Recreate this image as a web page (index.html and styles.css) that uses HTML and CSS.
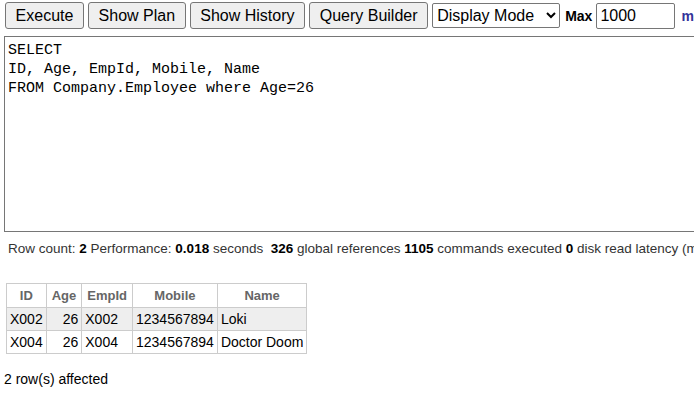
FILE: index.html
```html
<!DOCTYPE html>
<html lang="en">
<head>
  <meta charset="UTF-8" />
  <title>SQL Query</title>
  <link rel="stylesheet" href="styles.css">
</head>
<body>
  <div class="toolbar">
    <button class="btn">Execute</button>
    <button class="btn">Show Plan</button>
    <button class="btn">Show History</button>
    <button class="btn">Query Builder</button>
    <select class="mode">
      <option>Display Mode</option>
    </select>
    <b class="max-label">Max</b>
    <input class="max" type="text" value="1000" />
    <a class="more" href="#">more</a>
  </div>

  <textarea class="query" spellcheck="false">SELECT
ID, Age, EmpId, Mobile, Name
FROM Company.Employee where Age=26</textarea>

  <p class="stats">Row count: <b>2</b> Performance: <b>0.018</b> seconds&nbsp; <b>326</b> global references <b>1105</b> commands executed <b>0</b> disk read latency (ms)</p>

  <table class="results">
    <tr>
      <th>ID</th><th>Age</th><th>EmpId</th><th>Mobile</th><th>Name</th>
    </tr>
    <tr class="odd">
      <td>X002</td><td class="num">26</td><td>X002</td><td>1234567894</td><td>Loki</td>
    </tr>
    <tr>
      <td>X004</td><td class="num">26</td><td>X004</td><td>1234567894</td><td>Doctor Doom</td>
    </tr>
  </table>

  <p class="affected">2 row(s) affected</p>
</body>
</html>
```

FILE: styles.css
```css
body {
  margin: 0;
  padding: 2px 0 0 4px;
  font-family: "Liberation Sans", Arial, sans-serif;
  color: #000;
  overflow: hidden;
  white-space: nowrap;
}
.toolbar {
  display: flex;
  align-items: center;
  gap: 4px;
  height: 27px;
}
.toolbar > * {
  flex-shrink: 0;
}
.btn {
  font-family: "Liberation Sans", Arial, sans-serif;
  font-size: 16px;
  height: 27px;
  padding: 0 9.6px;
  background: #efefef;
  border: 1px solid #767676;
  border-radius: 3px;
  color: #000;
}
.toolbar .btn:first-child {
  margin-left: 1px;
}
.mode {
  font-family: "Liberation Sans", Arial, sans-serif;
  font-size: 16px;
  height: 25px;
  width: 128px;
  border: 1px solid #767676;
  border-radius: 2px;
  background: #fff;
  color: #000;
}
.max-label {
  font-size: 14px;
  margin-left: 1px;
}
.max {
  font-family: "Liberation Sans", Arial, sans-serif;
  font-size: 16px;
  width: 79px;
  height: 26px;
  box-sizing: border-box;
  padding: 1px 3px;
  border: 1px solid #767676;
  border-radius: 2px;
}
.more {
  margin-left: 2px;
  font-size: 14px;
  font-weight: bold;
  color: #333399;
  text-decoration: none;
}
.query {
  display: block;
  margin-top: 7px;
  width: 700px;
  height: 196px;
  box-sizing: border-box;
  padding: 4px 3px 2px;
  border: 1px solid #767676;
  font-family: "Liberation Mono", Consolas, monospace;
  font-size: 15px;
  line-height: 19px;
  resize: none;
}
.stats {
  margin: 9px 0 0 4px;
  font-size: 13.5px;
  color: #333;
}
.stats b {
  color: #000;
}
.results {
  margin: 27px 0 0 2px;
  border-collapse: collapse;
  font-size: 14px;
}
.results th,
.results td {
  border: 1px solid #ccc;
  padding: 2px 3px;
  height: 18px;
}
.results th {
  font-size: 13px;
  color: #666;
  padding: 3px 5px;
  height: 17px;
}
.results .odd {
  background: #eee;
}
.results .num {
  text-align: right;
}
.affected {
  margin: 17px 0 0 0;
  font-size: 14px;
}
```
